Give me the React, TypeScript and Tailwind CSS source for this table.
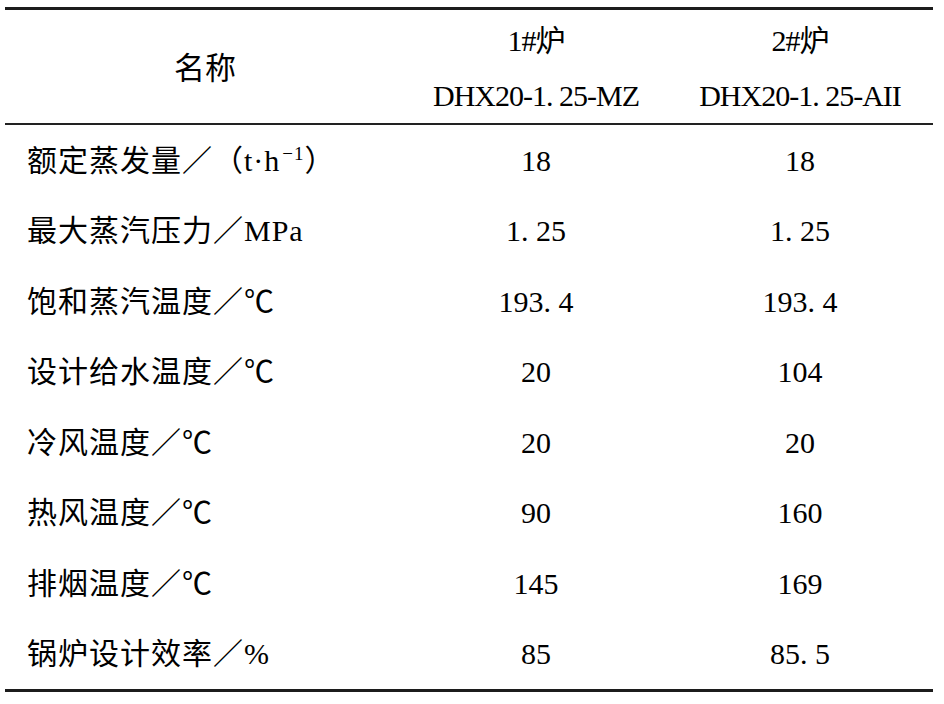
import React from 'react';

const rows: [React.ReactNode, string, string][] = [
  [
    <>
      额定蒸发量／（t·h<span className="inline-block text-[19px] -translate-y-[11px] ml-[2px]">−1</span>）
    </>,
    '18',
    '18',
  ],
  ['最大蒸汽压力／MPa', '1. 25', '1. 25'],
  ['饱和蒸汽温度／℃', '193. 4', '193. 4'],
  ['设计给水温度／℃', '20', '104'],
  ['冷风温度／℃', '20', '20'],
  ['热风温度／℃', '90', '160'],
  ['排烟温度／℃', '145', '169'],
  ['锅炉设计效率／%', '85', '85. 5'],
];

const font = { fontFamily: '"Liberation Serif", "Noto Sans CJK SC", serif' };

const App = () => {
  return (
    <div className="w-[944px] h-[704px] bg-white text-black" style={font}>
      <div className="ml-[5px] mt-[7px] w-[928px] border-t-[3px] border-b-[3px] border-[#1c1c1c]">
        {/* header */}
        <div className="grid grid-cols-[400px_262px_266px] h-[115px] border-b-2 border-[#222]">
          <div className="flex items-center justify-center text-[31px] pt-[6px]">名称</div>
          <div className="flex flex-col items-center justify-center gap-[23px] text-[30px] leading-[32px] pt-1">
            <span className="tracking-[-1px]">1#炉</span>
            <span className="tracking-[-1px]">DHX20-1. 25-MZ</span>
          </div>
          <div className="flex flex-col items-center justify-center gap-[23px] text-[30px] leading-[32px] pt-1">
            <span className="tracking-[-1px]">2#炉</span>
            <span className="tracking-[-1px]">DHX20-1. 25-AII</span>
          </div>
        </div>
        {/* body */}
        {rows.map(([name, a, b], i) => (
          <div key={i} className="grid grid-cols-[400px_262px_266px] h-[70.5px] items-center text-[30px]">
            <div className="pl-[22px] tracking-[1px]">{name}</div>
            <div className="text-center">{a}</div>
            <div className="text-center">{b}</div>
          </div>
        ))}
      </div>
    </div>
  );
};

export default App;
